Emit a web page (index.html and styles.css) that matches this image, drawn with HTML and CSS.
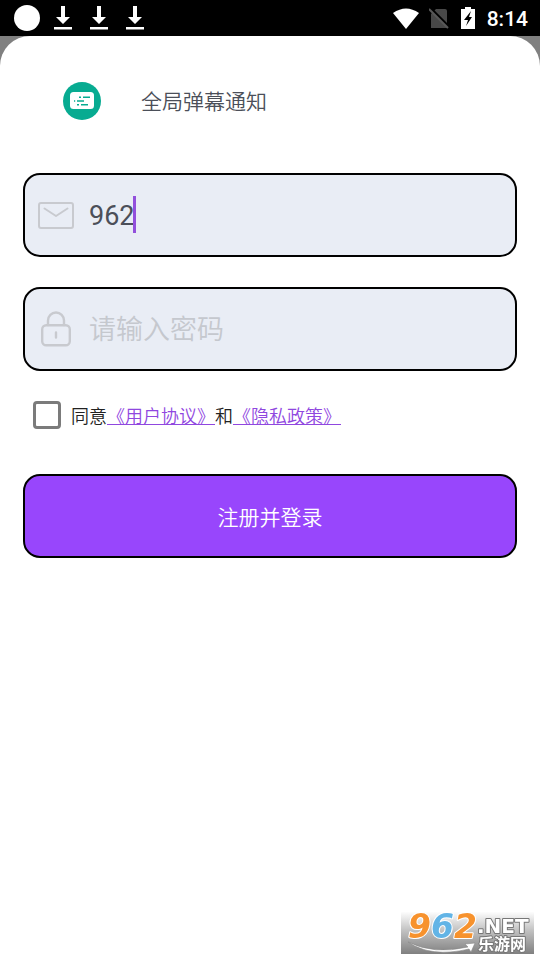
FILE: index.html
```html
<!DOCTYPE html>
<html lang="zh-CN">
<head>
<meta charset="utf-8">
<meta name="viewport" content="width=device-width, initial-scale=1">
<title>全局弹幕通知</title>
<link rel="stylesheet" href="styles.css">
</head>
<body>
<header class="status">
  <div class="status-left">
    <span class="dot"></span>
    <svg class="download" viewBox="0 0 18 24"><path d="M7 0h4v11h5l-7 7-7-7h5zM0 21h18v2.400H0z"/></svg>
    <svg class="download" viewBox="0 0 18 24"><path d="M7 0h4v11h5l-7 7-7-7h5zM0 21h18v2.400H0z"/></svg>
    <svg class="download" viewBox="0 0 18 24"><path d="M7 0h4v11h5l-7 7-7-7h5zM0 21h18v2.400H0z"/></svg>
  </div>
  <div class="status-right">
    <svg class="wifi" viewBox="0 0 26 21"><path d="M0 5Q13-4 26 5L13 21z" fill="#fff"/></svg>
    <svg class="sim" viewBox="0 0 20 21"><path d="M7 1h9q2 0 2 2v17H2V6z" fill="#484848"/><path d="M1 0l19 19" stroke="#000" stroke-width="3"/><path d="M0 1l19 19" stroke="#585858" stroke-width="2"/></svg>
    <svg class="battery" viewBox="0 0 14 22"><path d="M4 0h6v2h4v20H0V2h4z" fill="#fff"/><path d="M10 4L3 13h4l-2 6 6-9H8z" fill="#000"/></svg>
    <span class="clock">8:14</span>
  </div>
</header>
<div class="backdrop">
<main class="sheet">
  <div class="brand">
    <svg class="logo" viewBox="0 0 38 38"><circle cx="19" cy="19" r="19" fill="#07ab91"/><rect x="7" y="10" width="24" height="17" rx="3.500" fill="#fff"/><path d="M16 15.200h2M20 15.200h7M11 19h1.200M14 19h7M14 22.800h2M18 22.800h7" stroke="#07ab91" stroke-width="1.500"/></svg>
    <h1 class="title">全局弹幕通知</h1>
  </div>
  <form class="form">
    <div class="field">
      <svg class="icon" viewBox="0 0 36 36"><g fill="none" stroke="#c8cacf" stroke-width="2" stroke-linecap="round" stroke-linejoin="round"><rect x="1" y="6" width="34" height="25" rx="2"/><path d="M6.500 11.500L18 19l11.500-7.500"/></g></svg>
      <input class="input account" type="text" aria-label="账号" value="962">
      <span class="caret"></span>
    </div>
    <div class="field">
      <svg class="icon" viewBox="0 0 36 36"><g fill="none" stroke="#c8cacf" stroke-width="2.400" stroke-linecap="round"><rect x="4.200" y="14.200" width="27.600" height="20" rx="4"/><path d="M10 14V9.500a8 8 0 0 1 16 0V14M18 21.500v5"/></g></svg>
      <input class="input" type="password" aria-label="密码" placeholder="请输入密码">
    </div>
    <div class="agree">
      <input class="check" type="checkbox" id="agree">
      <label class="terms" for="agree">同意<a href="#terms">《用户协议》</a>和<a href="#privacy">《隐私政策》</a></label>
    </div>
    <button class="submit" type="button">注册并登录</button>
  </form>
</main>
</div>
<aside class="mark">
  <svg viewBox="0 0 133 42">
    <defs><linearGradient id="g" x2="0" y2="1"><stop stop-color="#fdfdfd"/><stop offset=".45" stop-color="#c0c0c0"/><stop offset="1" stop-color="#808080"/></linearGradient></defs>
    <rect width="133" height="42" fill="url(#g)"/>
    <path d="M7 30Q33 43 67 35l-3-3 10-1-4 9-2-3Q30 46 7 30z" fill="#fff" stroke="#888" stroke-width=".6"/>
    <text class="mark-number" x="7" y="26"><tspan class="orange">9</tspan><tspan class="blue">6</tspan><tspan class="orange">2</tspan></text>
    <text class="mark-net" x="76" y="21">.NET</text>
    <text class="mark-cn" x="77" y="38">乐游网</text>
  </svg>
</aside>
</body>
</html>
```
FILE: styles.css
```css
* { box-sizing: border-box; }

body {
  margin: 0;
  min-height: 100vh;
  display: flex;
  flex-direction: column;
  background: #fff;
  font-family: Roboto, "Noto Sans CJK SC", sans-serif;
}

.status {
  height: 36px;
  padding: 0 12px 0 14px;
  display: flex;
  align-items: center;
  justify-content: space-between;
  background: #000;
  color: #fff;
}

.status-left { display: flex; align-items: center; gap: 18px; }
.dot { width: 26px; height: 26px; margin-right: -4px; border-radius: 50%; background: #fff; }
.download { width: 18px; height: 24px; fill: #fff; }
.status-right { display: flex; align-items: center; gap: 10px; }
.wifi { width: 26px; height: 21px; }
.sim { width: 20px; height: 21px; }
.battery { width: 14px; height: 22px; margin: 0 2px; }
.clock { padding-top: 2px; font-size: 21px; font-weight: 500; line-height: 34px; }

.backdrop { flex: 1; display: flex; background: linear-gradient(#808080 40px, #fff 40px); }
.sheet { flex: 1; padding: 46px 23px; border-radius: 30px 30px 0 0; background: #fff; }

.brand { display: flex; align-items: center; gap: 40px; height: 38px; padding-left: 40px; }
.logo { width: 38px; height: 38px; }
.title { margin: 0; padding-top: 2px; font-size: 21px; font-weight: 350; line-height: 38px; color: #4b4f59; }

.form { margin-top: 53px; display: flex; flex-direction: column; }

.field {
  position: relative;
  height: 84px;
  margin-bottom: 30px;
  padding: 0 13px;
  display: flex;
  align-items: center;
  gap: 15px;
  border: 2px solid #000;
  border-radius: 17px;
  background: #e9edf5;
}

.icon { flex: none; width: 36px; height: 36px; }

.input {
  flex: 1;
  min-width: 0;
  height: 48px;
  padding: 2px 0 0;
  border: 0;
  outline: 0;
  background: transparent;
  color: #4b4f59;
  font: 27px Roboto, "Noto Sans CJK SC", sans-serif;
}

.input::placeholder { color: #c5c8ce; font-weight: 350; opacity: 1; }

.caret { position: absolute; left: 108px; top: 21px; width: 3px; height: 37px; background: #9250dc; }

.agree { display: flex; align-items: center; gap: 10px; height: 28px; padding-left: 10px; }

.check {
  appearance: none;
  width: 28px;
  height: 28px;
  margin: 0;
  border: 3px solid #7b7b7b;
  border-radius: 4px;
  background: #fff;
}

.terms { padding-top: 4px; font-size: 18px; font-weight: 350; line-height: 28px; color: #222; }
.terms a { color: #9047df; text-decoration: underline; text-decoration-thickness: 1px; text-decoration-skip-ink: none; }

.submit {
  height: 84px;
  margin-top: 45px;
  border: 2px solid #000;
  border-radius: 17px;
  background: #9846fc;
  color: #fff;
  font: 350 21px Roboto, "Noto Sans CJK SC", sans-serif;
}

.mark { position: fixed; right: 6px; bottom: 6px; width: 133px; height: 42px; }
.mark svg { display: block; overflow: visible; }
.mark text { font-family: "DejaVu Sans", "Noto Sans CJK SC", sans-serif; font-weight: 700; paint-order: stroke; stroke-linejoin: round; }
.mark .mark-number { font-size: 33px; font-style: italic; stroke: #fff; stroke-width: 2px; }
.orange { fill: #f7922d; }
.blue { fill: #62b4e6; }
.mark .mark-net { font-size: 20px; fill: #fff; stroke: #777; stroke-width: 2px; }
.mark .mark-cn { font-size: 16px; fill: #fff; stroke: #777; stroke-width: 2px; }
```
